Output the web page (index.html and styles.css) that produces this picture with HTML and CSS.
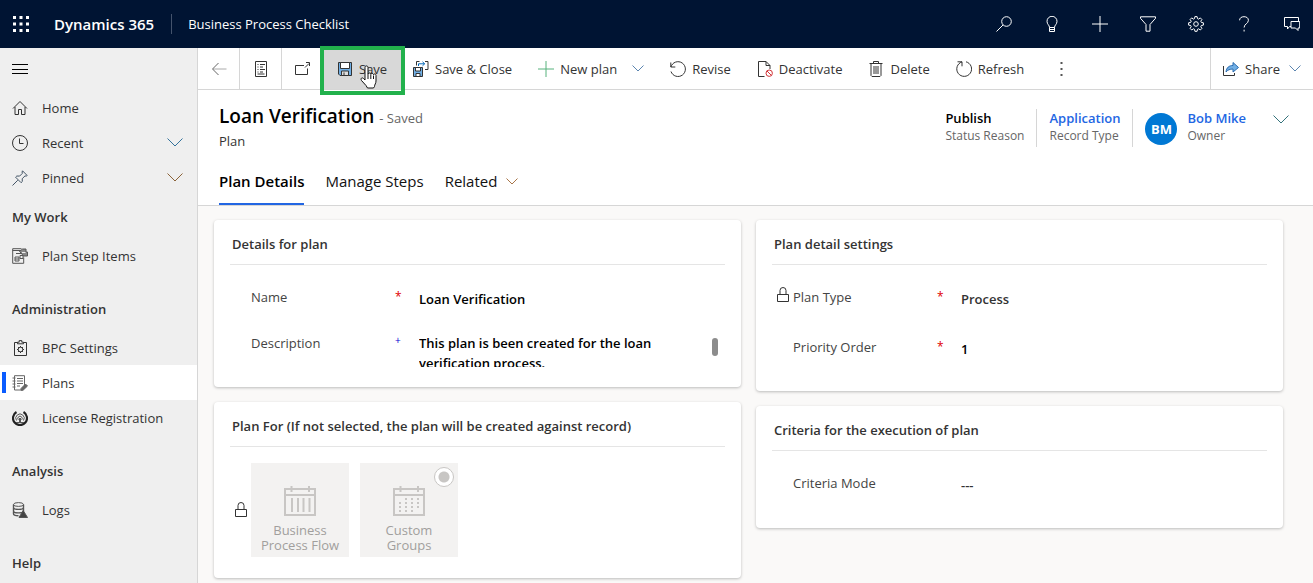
FILE: index.html
```html
<!DOCTYPE html>
<html lang="en">
<head>
<meta charset="utf-8">
<title>Loan Verification - Dynamics 365</title>
<link rel="stylesheet" href="styles.css">
</head>
<body>
<header class="topbar">
  <button class="top-btn waffle" aria-label="App launcher"><svg class="icon" viewBox="0 0 16 16" fill="#fff"><path d="M0 0h3v3H0zM6.500 0h3v3h-3zM13 0h3v3h-3zM0 6.500h3v3H0zM6.500 6.500h3v3h-3zM13 6.500h3v3h-3zM0 13h3v3H0zM6.500 13h3v3h-3zM13 13h3v3h-3z"/></svg></button>
  <a class="brand" href="#">Dynamics 365</a>
  <a class="app-name" href="#">Business Process Checklist</a>
  <nav class="top-actions" aria-label="Global">
    <button class="top-btn" aria-label="Search"><svg class="icon" viewBox="0 0 16 16"><circle cx="10.500" cy="5.500" r="4.800"/><path d="M7 9L.5 15.500"/></svg></button>
    <button class="top-btn" aria-label="Assistant"><svg class="icon" viewBox="0 0 16 16"><path d="M5.500 11.500C5.500 9 3 8.500 3 5.300a5 5 0 0 1 10 0c0 3.200-2.500 3.700-2.500 6.200zM5.500 11.500v4h5v-4M5.500 13.500h5"/></svg></button>
    <button class="top-btn" aria-label="New"><svg class="icon" viewBox="0 0 16 16"><path d="M8 0v16M0 8h16"/></svg></button>
    <button class="top-btn" aria-label="Filter"><svg class="icon" viewBox="0 0 16 16"><path d="M.5.8h15v1.500L10 8.500v6.700H6V8.500L.5 2.300z"/></svg></button>
    <button class="top-btn" aria-label="Settings"><svg class="icon" viewBox="0 0 16 16"><path d="M6.900.6h2.200l.4 2 1.100.5 1.700-1.200 1.600 1.600-1.100 1.700.5 1.200 2.100.4v2.300l-2.100.4-.5 1.200 1.100 1.700-1.600 1.600-1.700-1.200-1.100.5-.4 2H6.900l-.4-2-1.100-.5L3.700 14l-1.600-1.600 1.100-1.700-.5-1.200L.6 9.100V6.800l2.100-.4.5-1.200-1.100-1.700 1.600-1.600 1.700 1.200 1.100-.5z"/><circle cx="8" cy="8" r="2.300"/></svg></button>
    <button class="top-btn" aria-label="Help"><svg class="icon" viewBox="0 0 16 16"><path d="M3.600 4.300C3.600 2 5.400.7 8 .7s4.400 1.300 4.400 3.600c0 3.400-4.300 3.600-4.300 7.200M8.100 13.700v1.800"/></svg></button>
    <button class="top-btn" aria-label="Feedback"><svg class="icon" viewBox="0 0 16 16"><path d="M7 10.500H5.500l-2 2.500v-2.500H.5v-9h14v4M7 5.500h8.700v6.500h-1.700v2.500L11.500 12H7z"/></svg></button>
  </nav>
</header>

<div class="shell">
  <nav class="sidebar" aria-label="Site map">
    <button class="menu-btn" aria-label="Toggle navigation"><svg class="icon" viewBox="0 0 16 16" stroke="#000"><path d="M0 3.500h16M0 8.500h16M0 12.500h16"/></svg></button>
    <a class="nav-item" href="#"><svg class="icon" viewBox="0 0 16 16"><path d="M1 8.500L8 1.500l7 7M3 7v7.500h3.500V9.500h3v5H13V7"/></svg>Home</a>
    <a class="nav-item" href="#"><svg class="icon" viewBox="0 0 16 16"><circle cx="8" cy="8" r="7.500"/><path d="M7.500 3.500v5h4"/></svg>Recent<svg class="chev" viewBox="0 0 16 9" stroke="#33729b"><path d="M.5.5L8 8 15.500.5"/></svg></a>
    <a class="nav-item" href="#"><svg class="icon" viewBox="0 0 16 16" stroke="#456"><path d="M10.500.8l4.700 4.700-1 .6-1.200-.2-2.800 2.800.1 2.800-1.200 1.200-5.500-5.500 1.200-1.200 2.800.1L10.300 3.400l-.2-1.400zM5.800 10.200L.5 15.500"/></svg>Pinned<svg class="chev" viewBox="0 0 16 9" stroke="#8a6238"><path d="M.5.5L8 8 15.500.5"/></svg></a>
    <section class="nav-group">
      <h2 class="nav-title">My Work</h2>
      <a class="nav-item" href="#"><svg class="icon" viewBox="0 0 16 16" stroke="#555"><path d="M9.500.7H.7v14.600h11V9.500M.7 2.500h8M3 9h4v4H3zM3 11h4M8 7.500h3v3H8zM4 5.500h5"/><path d="M7.500 3.500L10.500 1H14v3h1.500v4H11l-1-2z" fill="#888"/><path d="M10 4.500h3.500" stroke="#eee"/></svg>Plan Step Items</a>
    </section>
    <section class="nav-group">
      <h2 class="nav-title">Administration</h2>
      <a class="nav-item" href="#"><svg class="icon" viewBox="0 0 16 16"><path d="M5.500 2.500h-3v13h12v-13h-3M5.500 3.800V2.200h1.700V.6h2.600v1.600h1.700v1.600z"/><circle cx="8.500" cy="9.500" r="2.300"/><path d="M8.500 6v1.200M8.500 11.800V13M5 9.500h1.200M10.800 9.500H12M6 7l.9.900M11 12l-.9-.9M11 7l-.9.900M6 12l.9-.9"/></svg>BPC Settings</a>
      <a class="nav-item is-active" href="#" aria-current="page"><svg class="icon" viewBox="0 0 16 16" stroke="#666"><path d="M2.500.7h10v11l-3 3.300H2.500zM.5 3h3M.5 6h3M.5 9h3M.5 12h3M5 3.500h6M5 6h6M5 8.500h6M5 11h3"/><path d="M9 13.500L13.500 9 15.500 11 11 15.300H9z" fill="#666"/></svg>Plans</a>
      <a class="nav-item" href="#"><svg class="icon" viewBox="0 0 16 16"><path d="M4.500 2A7 7 0 1 0 11.500 2" stroke="#222" stroke-width="2.200"/><path d="M4.500 10.500a4.200 4.200 0 1 1 7 0M6.300 9.800a2.200 2.200 0 1 1 3.400 0" stroke="#555"/><path d="M7 8h2v4H7z" fill="#555" stroke="none"/><path d="M4 12.500h8" stroke="#555"/></svg>License Registration</a>
    </section>
    <section class="nav-group">
      <h2 class="nav-title">Analysis</h2>
      <a class="nav-item" href="#"><svg class="icon" viewBox="0 0 16 16" stroke="#555"><ellipse cx="6.500" cy="2.500" rx="5" ry="1.900"/><path d="M1.500 2.500v3c0 2.500 10 2.500 10 0v-3M1.500 6v3c0 2.500 10 2.500 10 0V6M1.500 9.500v2.300c0 1.500 3 2 5 2" stroke-width="1.400"/><path d="M11.200 8.500l4.300 7H7z" fill="#444"/></svg>Logs</a>
    </section>
    <section class="nav-group">
      <h2 class="nav-title">Help</h2>
    </section>
  </nav>

  <main class="main">
    <div class="commands" role="toolbar" aria-label="Commands">
      <button class="cmd cmd-square" aria-label="Back"><svg class="icon" viewBox="0 0 16 16"><path d="M2 8h13.500" stroke="#aaa"/><path d="M7.500 2L1.500 8l6 6" stroke="#666"/></svg></button>
      <button class="cmd cmd-square" aria-label="Form"><svg class="icon" viewBox="0 0 16 16"><path d="M2.500.5h11v15h-11zM4.500 3.500h1M7 3.500h5M4.500 6h1M7 6h3M4.500 8.500h1M7 8.500h5M4.500 11h1M7 11h3M4.500 13h7"/></svg></button>
      <button class="cmd cmd-square cmd-popout" aria-label="Open in new window"><svg class="icon" viewBox="0 0 16 16"><path d="M10 4.500H1.500v9h12V7.500M11 6.500L15 2.500M12 1.500h3.500V5"/></svg></button>
      <button class="cmd cmd-save"><svg class="icon" viewBox="0 0 16 16"><path d="M1.500 1.500h13v13H3l-1.500-1.500z" fill="#71afe5"/><path d="M3.500 1.500h9v6h-9z" fill="#fff"/><path d="M4.500 10h7v4.500h-7z" fill="#ddd"/><path d="M7 11.500v2.500"/></svg>Save
        <svg class="pointer" viewBox="0 0 18 24" aria-hidden="true"><path d="M5 12V2.500C5 .4 8 .4 8 2.500V9c.2-1.500 2.700-1.300 2.800.3 0-1.400 2.600-1.200 2.700.4.300-1.200 2.500-1 2.500.7V16c0 2.500-1.500 3.500-1.500 5.500l-1 1.500h-6L6 20.500l-4.500-5C.2 13.500 2 12 3.500 13.500L5 15z" fill="#fff" stroke="#111"/><path d="M8 9v5M10.800 9.500V14M13.500 10.500V14" stroke="#111"/></svg>
      </button>
      <button class="cmd cmd-first"><svg class="icon" viewBox="0 0 16 16"><path d="M.5 6.500h9v9h-9z" fill="#71afe5"/><path d="M2.500 6.500h5v3.500h-5z" fill="#fff"/><path d="M3 12.500h4v3H3z" fill="#fff"/><path d="M3.500 4.500V.5h3M12 .5h3v8h-3"/><path d="M5.500 5V2.800h6M9.500.8l2.200 2-2.200 2" stroke="#0067b8"/></svg>Save &amp; Close</button>
      <button class="cmd"><svg class="icon" viewBox="0 0 16 16" stroke="#57b27c"><path d="M8 0v16M0 8h16"/></svg>New plan<svg class="chev-small" viewBox="0 0 12 7" stroke="#5b85b0"><path d="M.5.5L6 6 11.500.5"/></svg></button>
      <button class="cmd"><svg class="icon" viewBox="0 0 16 16"><path d="M.8 1.500V6h4.500M.9 6A7.400 7.400 0 1 1 1 10.500"/></svg>Revise</button>
      <button class="cmd"><svg class="icon" viewBox="0 0 16 16"><path d="M7.500 15.500H1.500V.5H9l4 4V8M9 .5v4h4"/><circle cx="12.200" cy="12.200" r="3.200" stroke="#d13438"/><path d="M10 10l4.400 4.400" stroke="#d13438"/></svg>Deactivate</button>
      <button class="cmd"><svg class="icon" viewBox="0 0 16 16"><path d="M1.500 2.500h13M5.500 2.500v-2h5v2M3 2.500v12l1 1h8l1-1v-12M6 5v8M8 5v8M10 5v8"/></svg>Delete</button>
      <button class="cmd"><svg class="icon" viewBox="0 0 16 16"><path d="M1.500.8H6v4.500M10 .8A7.400 7.400 0 1 1 6 .9"/></svg>Refresh</button>
      <button class="cmd cmd-more" aria-label="More commands"><svg class="dots" viewBox="0 0 3 16"><path d="M.5 1h2v2h-2zM.5 7h2v2h-2zM.5 13h2v2h-2z" fill="#555" stroke="none"/></svg></button>
      <button class="cmd cmd-share"><svg class="icon" viewBox="0 0 16 16"><path d="M.5 5v9.500h11V12"/><path d="M3 11C3.500 6.500 6 4.500 10 4.500V1.500L15.500 6.500 10 11V8C7 8 4.500 9 3 11z" fill="#71afe5" stroke="#2b6cb0"/></svg>Share<svg class="chev-small" viewBox="0 0 12 7" stroke="#5b85b0"><path d="M.5.5L6 6 11.500.5"/></svg></button>
    </div>

    <div class="record-head">
      <div class="record-row">
        <div class="record-name">
          <h1 class="record-title">Loan Verification <span class="saved">- Saved</span></h1>
          <p class="entity">Plan</p>
        </div>
        <div class="facts">
          <div class="fact"><b class="fact-value">Publish</b><span class="fact-label">Status Reason</span></div>
          <div class="fact"><a class="fact-value" href="#">Application</a><span class="fact-label">Record Type</span></div>
          <div class="fact fact-owner"><span class="avatar">BM</span><div><a class="fact-value" href="#">Bob Mike</a><span class="fact-label">Owner</span></div></div>
          <button class="expand" aria-label="Expand header"><svg class="chev" viewBox="0 0 16 9" stroke="#33727b"><path d="M.5.5L8 8 15.500.5"/></svg></button>
        </div>
      </div>
      <div class="tabs" role="tablist">
        <button class="tab is-selected" role="tab" aria-selected="true">Plan Details</button>
        <button class="tab" role="tab">Manage Steps</button>
        <button class="tab" role="tab">Related<svg class="chev-small" viewBox="0 0 12 7" stroke="#a87548"><path d="M.5.5L6 6 11.500.5"/></svg></button>
      </div>
    </div>

    <form class="content">
      <div class="column">
        <section class="card">
          <h2 class="card-title">Details for plan</h2>
          <div class="field field-name"><label for="name">Name</label><span class="mark required">*</span><input id="name" value="Loan Verification"></div>
          <div class="field field-desc"><label for="desc">Description</label><span class="mark recommended">+</span><textarea id="desc">This plan is been created for the loan verification process.</textarea><span class="scroll-thumb"></span></div>
        </section>
        <section class="card card-for">
          <h2 class="card-title">Plan For (If not selected, the plan will be created against record)</h2>
          <div class="options">
            <svg class="lock" viewBox="0 0 12 16"><path d="M.5 7.500h11v7H.5zM3 7.500v-4a3 3 0 0 1 6 0v4"/></svg>
            <label class="option"><input class="radio" type="radio" name="planfor" disabled>
              <svg class="calendar" viewBox="0 0 32 30"><path d="M1 3h30v26H1zM1 9h30M7.500 0v6M25 0v6M8 12v14M14 12v14M19.500 12v14M25.500 12v14"/></svg>
              <span>Business Process Flow</span></label>
            <label class="option"><input class="radio" type="radio" name="planfor" checked disabled>
              <svg class="calendar" viewBox="0 0 32 30"><path d="M1 3h30v26H1zM1 9h30M7.500 0v6M25 0v6"/><path d="M12 13h16M6 17h22M6 21h22M6 25h16" stroke-dasharray="2 4"/></svg>
              <span>Custom Groups</span></label>
          </div>
        </section>
      </div>
      <div class="column">
        <section class="card card-settings">
          <h2 class="card-title">Plan detail settings</h2>
          <div class="field field-name"><svg class="lock" viewBox="0 0 12 16"><path d="M.5 7.500h11v7H.5zM3 7.500v-4a3 3 0 0 1 6 0v4"/></svg><label for="type">Plan Type</label><span class="mark required">*</span><select id="type" disabled><option>Process</option></select></div>
          <div class="field field-order"><label for="order">Priority Order</label><span class="mark required">*</span><input id="order" value="1"></div>
        </section>
        <section class="card card-criteria">
          <h2 class="card-title">Criteria for the execution of plan</h2>
          <div class="field field-name"><label for="mode">Criteria Mode</label><span class="mark"></span><select id="mode"><option>---</option></select></div>
        </section>
      </div>
    </form>
  </main>
</div>
</body>
</html>
```
FILE: styles.css
```css
* { box-sizing: border-box; }

body {
  margin: 0;
  height: 100vh;
  display: flex;
  flex-direction: column;
  overflow: hidden;
  font: 13px/20px "Open Sans", "Noto Sans", sans-serif;
  color: #333;
  background: #faf9f8;
  fill: none;
  stroke: #333;
}

button, input, select, textarea {
  font: inherit;
  color: inherit;
  border: 0;
  padding: 0;
  margin: 0;
  background: none;
}

a { color: inherit; text-decoration: none; }
h1, h2, p { margin: 0; }
svg { flex: none; display: block; }
.icon { width: 16px; height: 16px; }
.chev { width: 16px; height: 9px; }
.chev-small { width: 12px; height: 7px; }

/* Top bar */
.topbar {
  flex: none;
  height: 48px;
  display: flex;
  align-items: center;
  background: #001433;
  color: #fff;
  stroke: #fff;
}
.top-btn { width: 48px; height: 48px; display: grid; place-items: center; }
.waffle { width: 42px; stroke: none; }
.brand { margin-left: 12px; padding-right: 17px; font-size: 15px; font-weight: 600; border-right: 1px solid #44536c; }
.app-name { padding-left: 16px; }
.top-actions { margin-left: auto; display: flex; margin-right: -3px; }

.shell { flex: 1; min-height: 0; display: flex; }

/* Site map */
.sidebar {
  flex: none;
  width: 198px;
  background: #efefef;
  border-right: 1px solid #d6d6d6;
  overflow: hidden;
}
.menu-btn { height: 42px; padding-left: 12px; display: flex; align-items: center; }
.nav-item {
  height: 35px;
  padding: 0 14px 0 12px;
  display: flex;
  align-items: center;
  gap: 14px;
}
.nav-item .chev { margin-left: auto; }
.nav-item.is-active { background: #fff; position: relative; }
.nav-item.is-active::before {
  content: "";
  position: absolute;
  left: 2px;
  top: 7px;
  width: 4px;
  height: 21px;
  background: #0a5cff;
}
.nav-title { padding: 1px 0 0 12px; font-size: 13px; line-height: 42px; font-weight: 600; }
.nav-group + .nav-group { margin-top: 14px; }

/* Command bar */
.main { flex: 1; min-width: 0; display: flex; flex-direction: column; }
.commands {
  flex: none;
  height: 42px;
  display: flex;
  background: #fff;
  border-bottom: 1px solid #d6d6d6;
}
.cmd { display: flex; align-items: center; gap: 6px; padding: 0 13px; white-space: nowrap; }
.cmd .chev-small { margin-left: 9px; }
.cmd-square { width: 42px; justify-content: center; border-right: 1px solid #d6d6d6; }
.cmd-popout { width: 40px; border-right: 0; }
.cmd-save { position: relative; width: 80px; padding: 0 0 0 15px; background: #d8d8d8; }
.cmd-save::after {
  content: "";
  position: absolute;
  inset: -2px -3px -6px -2px;
  border: 4px solid #22b14c;
}
.pointer { position: absolute; left: 38px; top: 17px; width: 18px; height: 24px; }
.cmd-first { padding-left: 11px; }
.cmd-more { padding: 0 23px; }
.dots { width: 3px; height: 16px; }
.cmd-share { margin-left: auto; padding: 0 12px; border-left: 1px solid #d6d6d6; }
.cmd-share .chev-small { margin-left: 3px; }

/* Record header */
.record-head { flex: none; padding: 0 21px; background: #fff; border-bottom: 1px solid #d6d6d6; }
.record-row { display: flex; justify-content: space-between; padding-top: 14px; }
.record-title { font-size: 19px; line-height: 25px; font-weight: 600; color: #000; }
.saved { font-size: 13px; font-weight: 400; color: #666; }
.facts { display: flex; align-items: flex-start; padding-top: 5px; }
.fact { height: 38px; padding: 0 12px; border-right: 1px solid #d6d6d6; }
.fact-value { display: block; line-height: 18px; font-weight: 600; color: #000; }
a.fact-value { color: #2266e3; }
.fact-label { display: block; font-size: 12px; line-height: 18px; color: #666; }
.fact-owner { display: flex; gap: 10px; border-right: 0; }
.avatar {
  width: 32px;
  height: 32px;
  margin-top: 4px;
  border-radius: 50%;
  background: #0078d4;
  color: #fff;
  font-weight: 700;
  line-height: 32px;
  text-align: center;
}
.expand { padding: 6px 3px 5px 15px; }
.tabs { display: flex; gap: 21px; margin-top: 8px; }
.tab {
  height: 46px;
  display: flex;
  align-items: center;
  gap: 9px;
  font-size: 15px;
  color: #111;
  border-bottom: 2px solid transparent;
}
.tab.is-selected { font-weight: 600; color: #000; border-color: #2266e3; }

/* Form cards */
.content {
  flex: 1;
  min-height: 0;
  display: grid;
  grid-template-columns: 1fr 1fr;
  gap: 15px;
  align-items: start;
  padding: 14px 30px 0 16px;
  overflow: hidden;
}
.column { display: grid; gap: 15px; }
.card {
  min-height: 167px;
  padding: 10px 16px 0;
  background: #fff;
  border-radius: 4px;
  box-shadow: 0 1px 3px rgba(0, 0, 0, 0.25);
}
.card-for { min-height: 176px; }
.card-settings { min-height: 171px; }
.card-criteria { min-height: 122px; }
.card-title {
  padding: 4px 2px 10px;
  font-size: 13px;
  font-weight: 600;
  border-bottom: 1px solid #e5e5e5;
}
.field {
  position: relative;
  display: grid;
  grid-template-columns: 144px 24px 1fr;
  align-items: start;
  padding-left: 21px;
  color: #444;
}
.field-name { padding-top: 22px; }
.field-desc { padding-top: 22px; }
.field-order { padding-top: 26px; }
.field input, .field select, .field textarea {
  width: 100%;
  height: 24px;
  padding: 0;
  color: #000;
  font-weight: 600;
  font-size: 13px;
  line-height: 20px;
  appearance: none;
  opacity: 1;
}
.field select { color: #333; }
.field textarea { display: block; width: 248px; height: 34px; resize: none; overflow: hidden; }
.mark { font-size: 12px; line-height: 20px; }
.required { color: #e00000; }
.recommended { color: #0000d0; font-size: 10px; line-height: 14px; }
.scroll-thumb {
  position: absolute;
  right: 7px;
  bottom: 11px;
  width: 6px;
  height: 18px;
  border-radius: 3px;
  background: #8c8c8c;
}
.lock { width: 12px; height: 16px; }
.field .lock { position: absolute; left: 5px; top: 22px; }

.options { display: flex; align-items: center; gap: 11px; padding: 16px 0 0 5px; }
.options .lock { margin-right: -7px; }
.option {
  position: relative;
  width: 98px;
  height: 94px;
  display: flex;
  flex-direction: column;
  align-items: center;
  gap: 7px;
  padding: 23px 8px 0;
  background: #f3f2f1;
  color: #a19f9d;
  line-height: 15px;
  text-align: center;
}
.calendar { width: 32px; height: 30px; stroke: #c8c6c4; stroke-width: 2; }
.radio { display: none; }
.radio:checked {
  display: block;
  position: absolute;
  top: 4px;
  right: 4px;
  width: 20px;
  height: 20px;
  appearance: none;
  border: 1px solid #c8c6c4;
  border-radius: 50%;
  background: radial-gradient(circle, #c8c6c4 5px, #fff 6px);
}
```
